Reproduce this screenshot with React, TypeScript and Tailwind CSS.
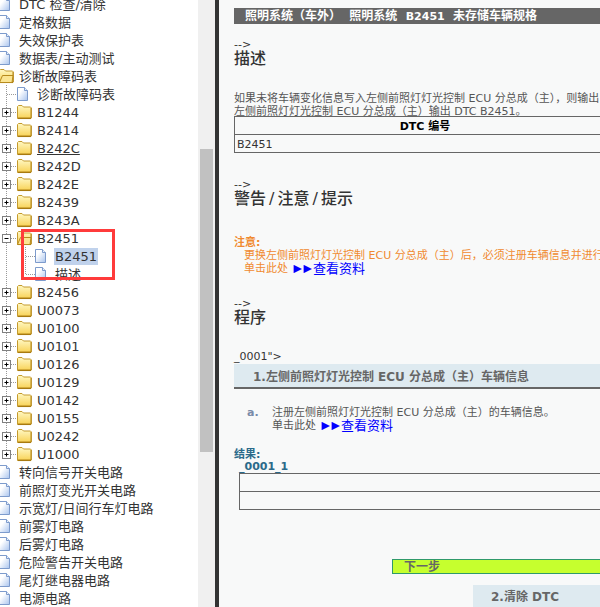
const cjk = "font-['DejaVu_Sans','Noto_Sans_CJK_SC',sans-serif]";

type Row = { label: string; level: number; kind: "page" | "closed" | "open"; underline?: boolean; selected?: boolean; last?: boolean };

const closed = (label: string, underline = false): Row => ({ label, level: 1, kind: "closed", underline });
const page0 = (label: string): Row => ({ label, level: 0, kind: "page" });

const ROWS: Row[] = [
  page0("DTC 检查/清除"),
  page0("定格数据"),
  page0("失效保护表"),
  page0("数据表/主动测试"),
  { label: "诊断故障码表", level: 0, kind: "open" },
  { label: "诊断故障码表", level: 1, kind: "page" },
  closed("B1244"),
  closed("B2414"),
  closed("B242C", true),
  closed("B242D"),
  closed("B242E"),
  closed("B2439"),
  closed("B243A"),
  { label: "B2451", level: 1, kind: "open" },
  { label: "B2451", level: 2, kind: "page", selected: true },
  { label: "描述", level: 2, kind: "page", last: true },
  closed("B2456"),
  closed("U0073"),
  closed("U0100"),
  closed("U0101"),
  closed("U0126"),
  closed("U0129"),
  closed("U0142"),
  closed("U0155"),
  closed("U0242"),
  { label: "U1000", level: 1, kind: "closed", last: true },
  page0("转向信号开关电路"),
  page0("前照灯变光开关电路"),
  page0("示宽灯/日间行车灯电路"),
  page0("前雾灯电路"),
  page0("后雾灯电路"),
  page0("危险警告开关电路"),
  page0("尾灯继电器电路"),
  page0("电源电路"),
];

function PageIcon() {
  return (
    <svg width="18" height="18" viewBox="0 0 18 18" className="shrink-0">
      <defs>
        <linearGradient id="pg" x1="0" y1="0" x2="1" y2="1">
          <stop offset="0.3" stopColor="#ffffff" />
          <stop offset="1" stopColor="#a9c4ee" />
        </linearGradient>
      </defs>
      <path d="M0.500 2.500h7l3 3v10h-10z" fill="url(#pg)" stroke="#7d9bcc" />
      <path d="M7.500 2.500v3h3" fill="#e8f0fb" stroke="#7d9bcc" />
    </svg>
  );
}

function FolderIcon({ open }: { open: boolean }) {
  return (
    <svg width="18" height="18" viewBox="0 0 18 18" className="shrink-0">
      <defs>
        <linearGradient id="fd" x1="0" y1="0" x2="0" y2="1">
          <stop offset="0" stopColor="#fff8c4" />
          <stop offset="1" stopColor="#f8d255" />
        </linearGradient>
      </defs>
      <path d="M0.500 15.500v-12l1-1h3.500l1.500 1.500h7l.5 .5v11z" fill="url(#fd)" stroke="#c49a2c" />
      <path d="M1 15.300h13" stroke="#a87a10" strokeWidth="1.500" />
      <path d="M14.300 5v10" stroke="#b98d1e" />
      {open && <path d="M0.500 15.500l3-7h10.500l-1 7z" fill="#fbe592" stroke="#b78a1c" />}
    </svg>
  );
}

function Lines({ row }: { row: Row }) {
  // vertical guide + expander box for the first tree level
  const expander = row.level === 1 && row.kind !== "page";
  const last = row.level === 1 && row.last;
  return (
    <svg width="17" height="18" viewBox="0 0 17 18" className="shrink-0">
      <path d={last ? "M6.500 0v9" : "M6.500 0v18"} stroke="#999" strokeDasharray="1 1" />
      {row.level === 1 && <path d="M7 9.500h10" stroke="#999" strokeDasharray="1 1" />}
      {expander && (
        <>
          <rect x="2.500" y="5.500" width="8" height="8" fill="#fff" stroke="#808080" />
          <path d="M4.500 9.500h4" stroke="#000" />
          {row.kind === "closed" && <path d="M6.500 7.500v4" stroke="#000" />}
        </>
      )}
    </svg>
  );
}

function TreeRow({ row }: { row: Row }) {
  return (
    <div className={`flex items-center h-[18px] whitespace-nowrap ${row.level === 0 ? "-ml-[1px]" : ""}`}>
      {row.level >= 1 && <Lines row={row} />}
      {row.level === 2 && (
        <svg width="18" height="18" viewBox="0 0 18 18" className="shrink-0">
          <path d={row.last ? "M8.500 0v9" : "M8.500 0v18"} stroke="#999" strokeDasharray="1 1" />
          <path d="M9 9.500h9" stroke="#999" strokeDasharray="1 1" />
        </svg>
      )}
      {row.kind === "page" ? <PageIcon /> : <FolderIcon open={row.kind === "open"} />}
      <span
        className={`ml-[1px] px-[1px] text-[13px] leading-[17px] text-[#333] ${row.underline ? "underline" : ""} ${
          row.selected ? "bg-[#c0d2ec]" : ""
        }`}
      >
        {row.label}
      </span>
    </div>
  );
}

function Arrows() {
  return (
    <svg width="20" height="10" viewBox="0 0 20 10" className="shrink-0">
      <path d="M1 1l8 4-8 4z" fill="#0000ff" />
      <path d="M11 1l8 4-8 4z" fill="#0000ff" />
      <path d="M0.500 1v8M10.500 1v8" stroke="#b090ff" />
    </svg>
  );
}

function ClickHere() {
  return (
    <div className="flex items-center h-[13px]">
      <span>单击此处</span>
      <a className="flex items-center ml-[5px] text-[#0000ff] text-[13px] leading-[13px]">
        <Arrows />
        <span>查看资料</span>
      </a>
    </div>
  );
}

function Comment({ className = "" }: { className?: string }) {
  return <div className={`text-[11px] leading-[13px] text-[#333] ${className}`}>--&gt;</div>;
}

function Heading({ children, className = "" }: { children: React.ReactNode; className?: string }) {
  return <h2 className={`text-[16px] leading-[20px] text-[#333] font-medium ${className}`}>{children}</h2>;
}

function Slash() {
  return <span className="inline-block w-[11.5px] text-center">/</span>;
}

function StepBar({ children, className = "" }: { children: React.ReactNode; className?: string }) {
  return (
    <div className={`bg-[#deeaf0] text-[12px] font-bold text-[#666] flex items-center ${className}`}>
      {children}
    </div>
  );
}

function Grid({ className = "", children }: { className?: string; children?: React.ReactNode }) {
  return (
    <div className={`border border-[#666] flex flex-col ${className}`}>{children}</div>
  );
}

export default function App() {
  return (
    <div className={`flex h-[607px] w-[600px] overflow-hidden bg-white ${cjk}`}>
      <aside className="relative w-[215px] shrink-0 flex overflow-hidden">
        <div className="w-[198px] shrink-0 -mt-[5px] overflow-hidden">
          {ROWS.map((row, i) => (
            <TreeRow key={i} row={row} />
          ))}
        </div>
        <div className="w-[17px] bg-[#f0f0f0] pt-[149px] pl-[2px]">
          <div className="w-[13px] h-[303px] bg-[#c1c1c1]" />
        </div>
        <div className="absolute left-[21px] top-[229px] w-[94px] h-[51px] border-[3px] border-[#ff3b3b]" />
      </aside>

      <div className="w-[4px] shrink-0 bg-[#333]" />

      <main className="flex-1 overflow-hidden bg-[#f8f9f9] pl-[15px] pt-[8px]">
        <div className="w-[382px] whitespace-nowrap">
          <div className="h-[16px] bg-[#666] text-white text-[12px] font-bold leading-[16px] pl-[11px]">
            照明系统（车外）&nbsp;&nbsp;照明系统&nbsp;&nbsp;<span className="text-[11px]">B2451</span>&nbsp;&nbsp;未存储车辆规格
          </div>

          <Comment className="mt-[14px]" />
          <Heading className="-mt-[2px]">描述</Heading>

          <div className="mt-[23px] text-[11px] leading-[13px] text-[#555]">
            <div>如果未将车辆变化信息写入左侧前照灯灯光控制 ECU 分总成（主），则输出</div>
            <div>左侧前照灯灯光控制 ECU 分总成（主）输出 DTC B2451。</div>
          </div>

          <Grid className="-mt-[2px] text-[11px]">
            <div className="h-[18px] pt-[3px] flex items-center justify-center font-bold text-black border-b border-[#666]">DTC 编号</div>
            <div className="h-[17px] pt-[3px] flex items-center pl-[2px] text-[#333]">B2451</div>
          </Grid>

          <Comment className="mt-[25px]" />
          <Heading className="-mt-[2px]">
            警告<Slash />注意<Slash />提示
          </Heading>

          <div className="mt-[27px] text-[11px] leading-[13px] text-[#f08a30]">
            <div className="font-bold">注意:</div>
            <div className="pl-[10px]">更换左侧前照灯灯光控制 ECU 分总成（主）后，必须注册车辆信息并进行</div>
            <div className="pl-[10px]">
              <ClickHere />
            </div>
          </div>

          <Comment className="mt-[22px]" />
          <Heading className="-mt-[2px]">程序</Heading>

          <div className="mt-[22px] text-[11px] leading-[13px] text-[#333]">_0001"&gt;</div>
          <StepBar className="mt-[1px] h-[25px] pl-[19px] pt-[3px] border-b-2 border-[#666]">
            1.左侧前照灯灯光控制 ECU 分总成（主）车辆信息
          </StepBar>

          <div className="mt-[17px] flex text-[11px] leading-[13px] text-[#555]">
            <span className="w-[38px] pl-[13px] font-bold text-[#7a8aa8]">a.</span>
            <div>
              <div>注册左侧前照灯灯光控制 ECU 分总成（主）的车辆信息。</div>
              <ClickHere />
            </div>
          </div>

          <div className="mt-[16px] text-[11px] leading-[13px] font-bold text-[#2b6a8a]">结果:</div>
          <div className="pl-[5px]">
            <div className="text-[11px] leading-[13px] -mt-[1px] font-bold text-[#2b6a8a]">_0001_1</div>
            <Grid className="h-[37px]">
              <div className="h-[18px] border-b border-[#666]" />
            </Grid>
          </div>

          <div className="mt-[49px] ml-[158px] h-[15px] bg-[#c6ff2e] border border-[#2f9a6a] text-[12px] leading-[14px] font-bold text-[#666] pl-[11px]">
            下一步
          </div>

          <StepBar className="mt-[11px] ml-[239px] h-[23px] pl-[18px]">2.清除 DTC</StepBar>
        </div>
      </main>
    </div>
  );
}
